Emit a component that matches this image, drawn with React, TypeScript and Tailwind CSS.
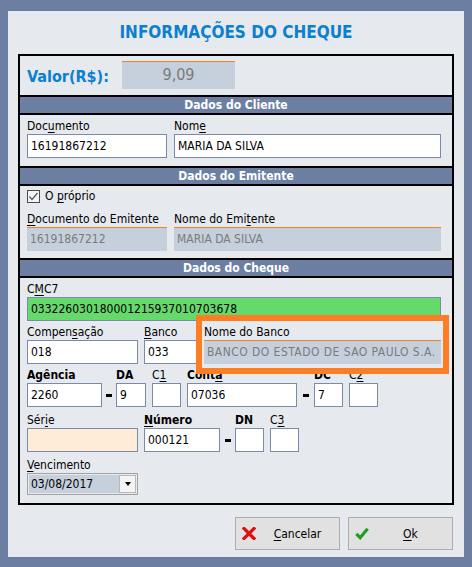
import type { ReactNode } from 'react';

// Tela "Informações do Cheque" (estilo formulário Windows).
const U = ({ children }: { children: ReactNode }) => (
  <span className="underline decoration-1 underline-offset-[2px]">{children}</span>
);

function Label({ children, bold = false }: { children?: ReactNode; bold?: boolean }) {
  return (
    <div className={`h-[16px] whitespace-nowrap leading-[16px] ${bold ? 'font-bold' : ''}`}>
      {children}
    </div>
  );
}

type Kind = 'white' | 'off' | 'green' | 'peach';

function Box({
  w,
  value = '',
  kind = 'white',
  extra = '',
}: {
  w: string;
  value?: string;
  kind?: Kind;
  extra?: string;
}) {
  const look = {
    white: 'border border-[#7a8aab] bg-white text-black',
    green: 'border border-[#7a8aab] bg-[#65d96b] text-black',
    peach: 'border border-[#7a8aab] bg-[#feecd6] text-black',
    off: 'border-t border-[#f08228] bg-[#c5d0dc] text-[#7b7b7b]',
  }[kind];
  return (
    <div
      className={`h-[24px] ${w} ${look} ${extra} overflow-hidden whitespace-nowrap pl-[3px] leading-[22px]`}
    >
      {value}
    </div>
  );
}

function Field({
  label,
  w,
  value,
  kind,
  bold,
  extra,
}: {
  label?: ReactNode;
  w: string;
  value?: string;
  kind?: Kind;
  bold?: boolean;
  extra?: string;
}) {
  return (
    <div className="flex flex-col">
      <Label bold={bold}>{label}</Label>
      <Box w={w} value={value} kind={kind} extra={extra} />
    </div>
  );
}

// Traço "-" entre campos (agência/DA, conta/DC, número/DN).
function Dash({ w }: { w: string }) {
  return (
    <div className={`flex ${w} flex-col`}>
      <div className="h-[16px]" />
      <div className="flex h-[24px] items-center justify-center">
        <div className="h-[3px] w-[6px] bg-black" />
      </div>
    </div>
  );
}

function Section({ title }: { title: string }) {
  return (
    <div className="h-[20px] border-y-2 border-black bg-[#6c7fa3] text-center text-[12px] font-bold leading-[16px] text-white">
      {title}
    </div>
  );
}

function Button({ icon, children }: { icon: ReactNode; children: ReactNode }) {
  return (
    <button
      type="button"
      className="flex h-[33px] w-[105px] items-center border border-[#adadad] bg-[#e1e1e1] pl-[6px] text-[12px] text-black"
    >
      <span className="flex w-[14px] justify-center">{icon}</span>
      <span className="flex-1 text-center">{children}</span>
    </button>
  );
}

export default function App() {
  return (
    <div className="h-[567px] w-[472px] bg-[#6c7fa3] px-[8px] pt-[11px] pb-[10px] font-['DejaVu_Sans_Condensed','DejaVu_Sans',sans-serif] text-[12px] text-black">
      <div className="flex h-[546px] flex-col bg-[#e6e9ee] px-[10px]">
        <div className="flex h-[43px] items-center justify-center text-[17px] font-bold text-[#0b7fd0]">
          INFORMAÇÕES DO CHEQUE
        </div>

        <div className="relative flex h-[451px] flex-col border-2 border-black">
          {/* valor */}
          <div className="flex h-[39px] items-start pl-[7px] pt-[5px]">
            <div className="flex h-[28px] w-[95px] items-center pt-[4px] text-[16px] font-bold text-[#0b7fd0]">
              Valor(R$):
            </div>
            <div className="h-[28px] w-[113px] border-t border-[#f08228] bg-[#c5d0dc] text-center text-[16px] leading-[26px] text-[#7b7b7b]">
              9,09
            </div>
          </div>

          <Section title="Dados do Cliente" />
          <div className="flex h-[51px] gap-[7px] px-[7px] pt-[3px]">
            <Field label={<>Doc<U>u</U>mento</>} w="w-[140px]" value="16191867212" />
            <Field label={<>Nom<U>e</U></>} w="w-[267px]" value="MARIA DA SILVA" />
          </div>

          <Section title="Dados do Emitente" />
          <div className="flex h-[72px] flex-col px-[7px] pt-[4px]">
            <div className="flex h-[13px] items-center gap-[5px]">
              <svg width="13" height="13" viewBox="0 0 13 13">
                <rect x="0.5" y="0.5" width="12" height="12" fill="#f4f5f7" stroke="#4a4a4a" />
                <polyline points="2.5,6.5 5,9.5 10.5,3" fill="none" stroke="#555" strokeWidth="1.2" />
              </svg>
              <span className="leading-[13px]">
                O <U>p</U>róprio
              </span>
            </div>
            <div className="mt-[8px] flex gap-[7px]">
              <Field
                label={<><U>D</U>ocumento do Emitente</>}
                w="w-[140px]"
                value="16191867212"
                kind="off"
              />
              <Field
                label={<>Nome do Emi<U>t</U>ente</>}
                w="w-[267px]"
                value="MARIA DA SILVA"
                kind="off"
              />
            </div>
          </div>

          <Section title="Dados do Cheque" />
          <div className="flex h-[225px] flex-col px-[7px] pt-[3px]">
            <Field
              label={<>C<U>M</U>C7</>}
              w="w-[414px]"
              value="033226030180001215937010703678"
              kind="green"
            />

            <div className="mt-[3px] flex gap-[6px]">
              <Field label={<>Compen<U>s</U>ação</>} w="w-[111px]" value="018" />
              <Field label={<><U>B</U>anco</>} w="w-[54px]" value="033" />
              <Field
                label="Nome do Banco"
                w="w-[237px]"
                value="BANCO DO ESTADO DE SAO PAULO S.A."
                kind="off"
                extra="tracking-[0.45px]"
              />
            </div>

            <div className="mt-[3px] flex">
              <Field label="Agência" bold w="w-[75px]" value="2260" />
              <Dash w="w-[14px]" />
              <Field label="DA" bold w="w-[30px]" value="9" />
              <div className="w-[6px]" />
              <Field label={<>C<U>1</U></>} w="w-[29px]" />
              <div className="w-[6px]" />
              <Field label={<>Cont<U>a</U></>} bold w="w-[110px]" value="07036" />
              <Dash w="w-[17px]" />
              <Field label="DC" bold w="w-[29px]" value="7" />
              <div className="w-[6px]" />
              <Field label={<>C<U>2</U></>} w="w-[29px]" />
            </div>

            <div className="mt-[5px] flex">
              <Field label={<>Sér<U>i</U>e</>} w="w-[111px]" kind="peach" />
              <div className="w-[6px]" />
              <Field label={<><U>N</U>úmero</>} bold w="w-[76px]" value="000121" />
              <Dash w="w-[15px]" />
              <Field label="DN" bold w="w-[29px]" />
              <div className="w-[6px]" />
              <Field label={<>C<U>3</U></>} w="w-[29px]" />
            </div>

            <div className="mt-[5px] flex flex-col">
              <Label>
                <U>V</U>encimento
              </Label>
              <div className="flex h-[22px] w-[111px] border border-[#a3a3a3] p-[1px]">
                <div className="flex-1 bg-[#c5d0dc] pl-[2px] leading-[18px]">03/08/2017</div>
                <div className="flex w-[17px] items-center justify-center border border-[#b8b8b8] bg-[#f4f4f4]">
                  <div className="h-0 w-0 border-x-[3.5px] border-t-[4px] border-x-transparent border-t-black" />
                </div>
              </div>
            </div>
          </div>

          {/* destaque laranja sobre "Nome do Banco" */}
          <div className="absolute left-[176px] top-[259px] h-[59px] w-[253px] border-[6px] border-[#fd7e22]" />
        </div>

        <div className="flex flex-1 items-start justify-end gap-[8px] pr-[1px] pt-[12px]">
          <Button
            icon={
              <svg width="14" height="13" viewBox="0 0 14 13">
                <path d="M2 1.5 L12 11.5 M12 1.5 L2 11.5" stroke="#e00d0d" strokeWidth="3.2" strokeLinecap="square" />
              </svg>
            }
          >
            <U>C</U>ancelar
          </Button>
          <Button
            icon={
              <svg width="15" height="13" viewBox="0 0 15 13">
                <path d="M1.5 7 L5.5 11 L13.5 1.5" fill="none" stroke="#1e9e24" strokeWidth="3.4" strokeLinejoin="miter" />
              </svg>
            }
          >
            <U>O</U>k
          </Button>
        </div>
      </div>
    </div>
  );
}
